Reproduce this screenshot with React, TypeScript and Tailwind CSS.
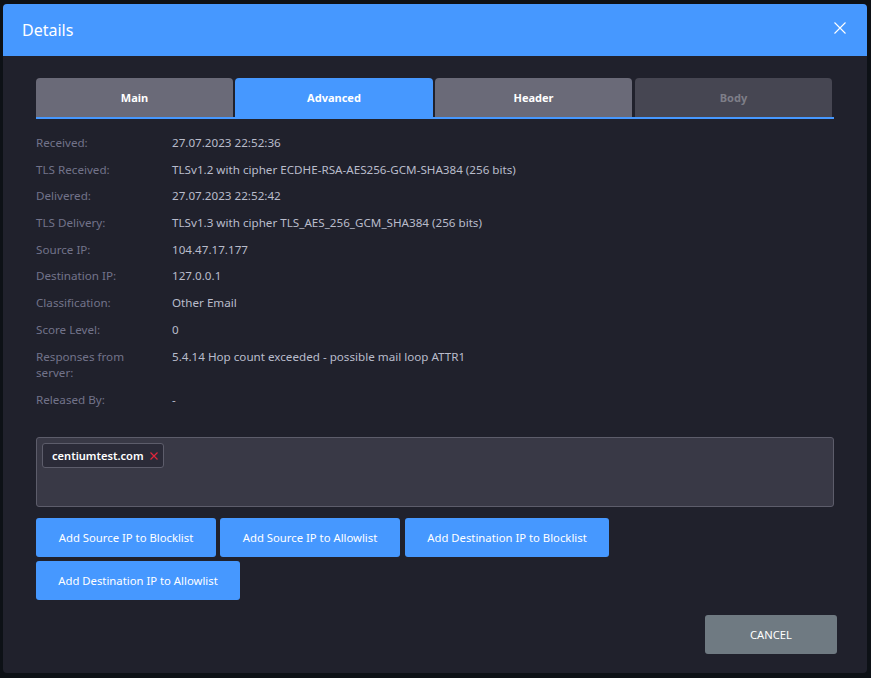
import React from "react";

const rows: [string, string][] = [
  ["Received:", "27.07.2023 22:52:36"],
  ["TLS Received:", "TLSv1.2 with cipher ECDHE-RSA-AES256-GCM-SHA384 (256 bits)"],
  ["Delivered:", "27.07.2023 22:52:42"],
  ["TLS Delivery:", "TLSv1.3 with cipher TLS_AES_256_GCM_SHA384 (256 bits)"],
  ["Source IP:", "104.47.17.177"],
  ["Destination IP:", "127.0.0.1"],
  ["Classification:", "Other Email"],
  ["Score Level:", "0"],
  ["Responses from server:", "5.4.14 Hop count exceeded - possible mail loop ATTR1"],
  ["Released By:", "-"],
];

function Action({ label, w }: { label: string; w: string }) {
  return (
    <button className={`h-[39px] rounded-[3px] bg-[#4698ff] pt-[1px] text-[11.3px] text-white ${w}`}>{label}</button>
  );
}

function Tab({ label, cls }: { label: string; cls: string }) {
  return (
    <div className={`flex h-[39px] items-center justify-center rounded-t-[4px] pt-[1px] text-[11px] font-bold ${cls}`}>{label}</div>
  );
}

export default function App() {
  return (
    <div className="h-[678px] w-[871px] overflow-hidden bg-[#0d1116] pt-1 pl-[3px] font-['Noto_Sans','Open_Sans',sans-serif]">
      <div className="h-[669px] w-[864px] overflow-hidden rounded-[4px] bg-[#20212c]">
        <div className="flex h-[52px] items-center justify-between bg-[#4698ff] pr-[21px] pl-[19px]">
          <span className="text-[16px] text-white">Details</span>
          <svg width="12" height="12" viewBox="0 0 12 12" className="mb-[4px]" fill="none" stroke="white" strokeWidth="1.1">
            <path d="M0.5 0.5L11.5 11.5M11.5 0.5L0.5 11.5" />
          </svg>
        </div>
        <div className="pt-[22px] pr-[33px] pl-[33px]">
          <div className="flex gap-[2px] border-b-2 border-[#4698ff] pr-[2px]">
            <Tab label="Main" cls="w-[197px] bg-[#6a6a78] text-white" />
            <Tab label="Advanced" cls="w-[198px] bg-[#4698ff] text-white" />
            <Tab label="Header" cls="w-[197px] bg-[#6a6a78] text-white" />
            <Tab label="Body" cls="ml-[1px] w-[197px] bg-[#464652] text-[#7e7e88]" />
          </div>
          <div className="pt-[11px]">
            {rows.map(([k, v]) => (
              <div
                key={k}
                className={`flex text-[11.65px] leading-[16.67px] ${k === "Responses from server:" ? "pt-[5.4px] pb-[4.6px]" : "py-[5px]"}`}
              >
                <div className="w-[136px] pr-[20px] text-[#72738a]">{k}</div>
                <div className="text-[#b9bccb]">{v}</div>
              </div>
            ))}
          </div>
          <div className="mt-[24px] h-[70px] rounded-[3px] border border-[#5d5d6b] bg-[#393946] pt-[5px] pl-[5px]">
            <div className="flex h-[25px] w-[122px] items-center rounded-[3px] border border-[#5d5d6b] bg-[#2b2b38] pl-[9px] text-[11.1px] font-semibold text-white">
              centiumtest.com
              <svg width="8" height="8" viewBox="0 0 8 8" className="ml-[6px]" fill="none" stroke="#e0263c" strokeWidth="1.2">
                <path d="M0.5 0.5L7.5 7.5M7.5 0.5L0.5 7.5" />
              </svg>
            </div>
          </div>
          <div className="mt-[11px] flex w-[600px] flex-wrap gap-x-[4px] gap-y-[4px]">
            <Action label="Add Source IP to Blocklist" w="w-[180px]" />
            <Action label="Add Source IP to Allowlist" w="w-[180px]" />
            <Action label="Add Destination IP to Blocklist" w="ml-[1px] w-[204px]" />
            <Action label="Add Destination IP to Allowlist" w="w-[204px]" />
          </div>
          <div className="mt-[15px] flex justify-end">
            <button className="mr-[-3px] h-[39px] w-[132px] rounded-[3px] bg-[#6f7a82] pt-[1px] text-[11.2px] text-white">CANCEL</button>
          </div>
        </div>
      </div>
    </div>
  );
}
